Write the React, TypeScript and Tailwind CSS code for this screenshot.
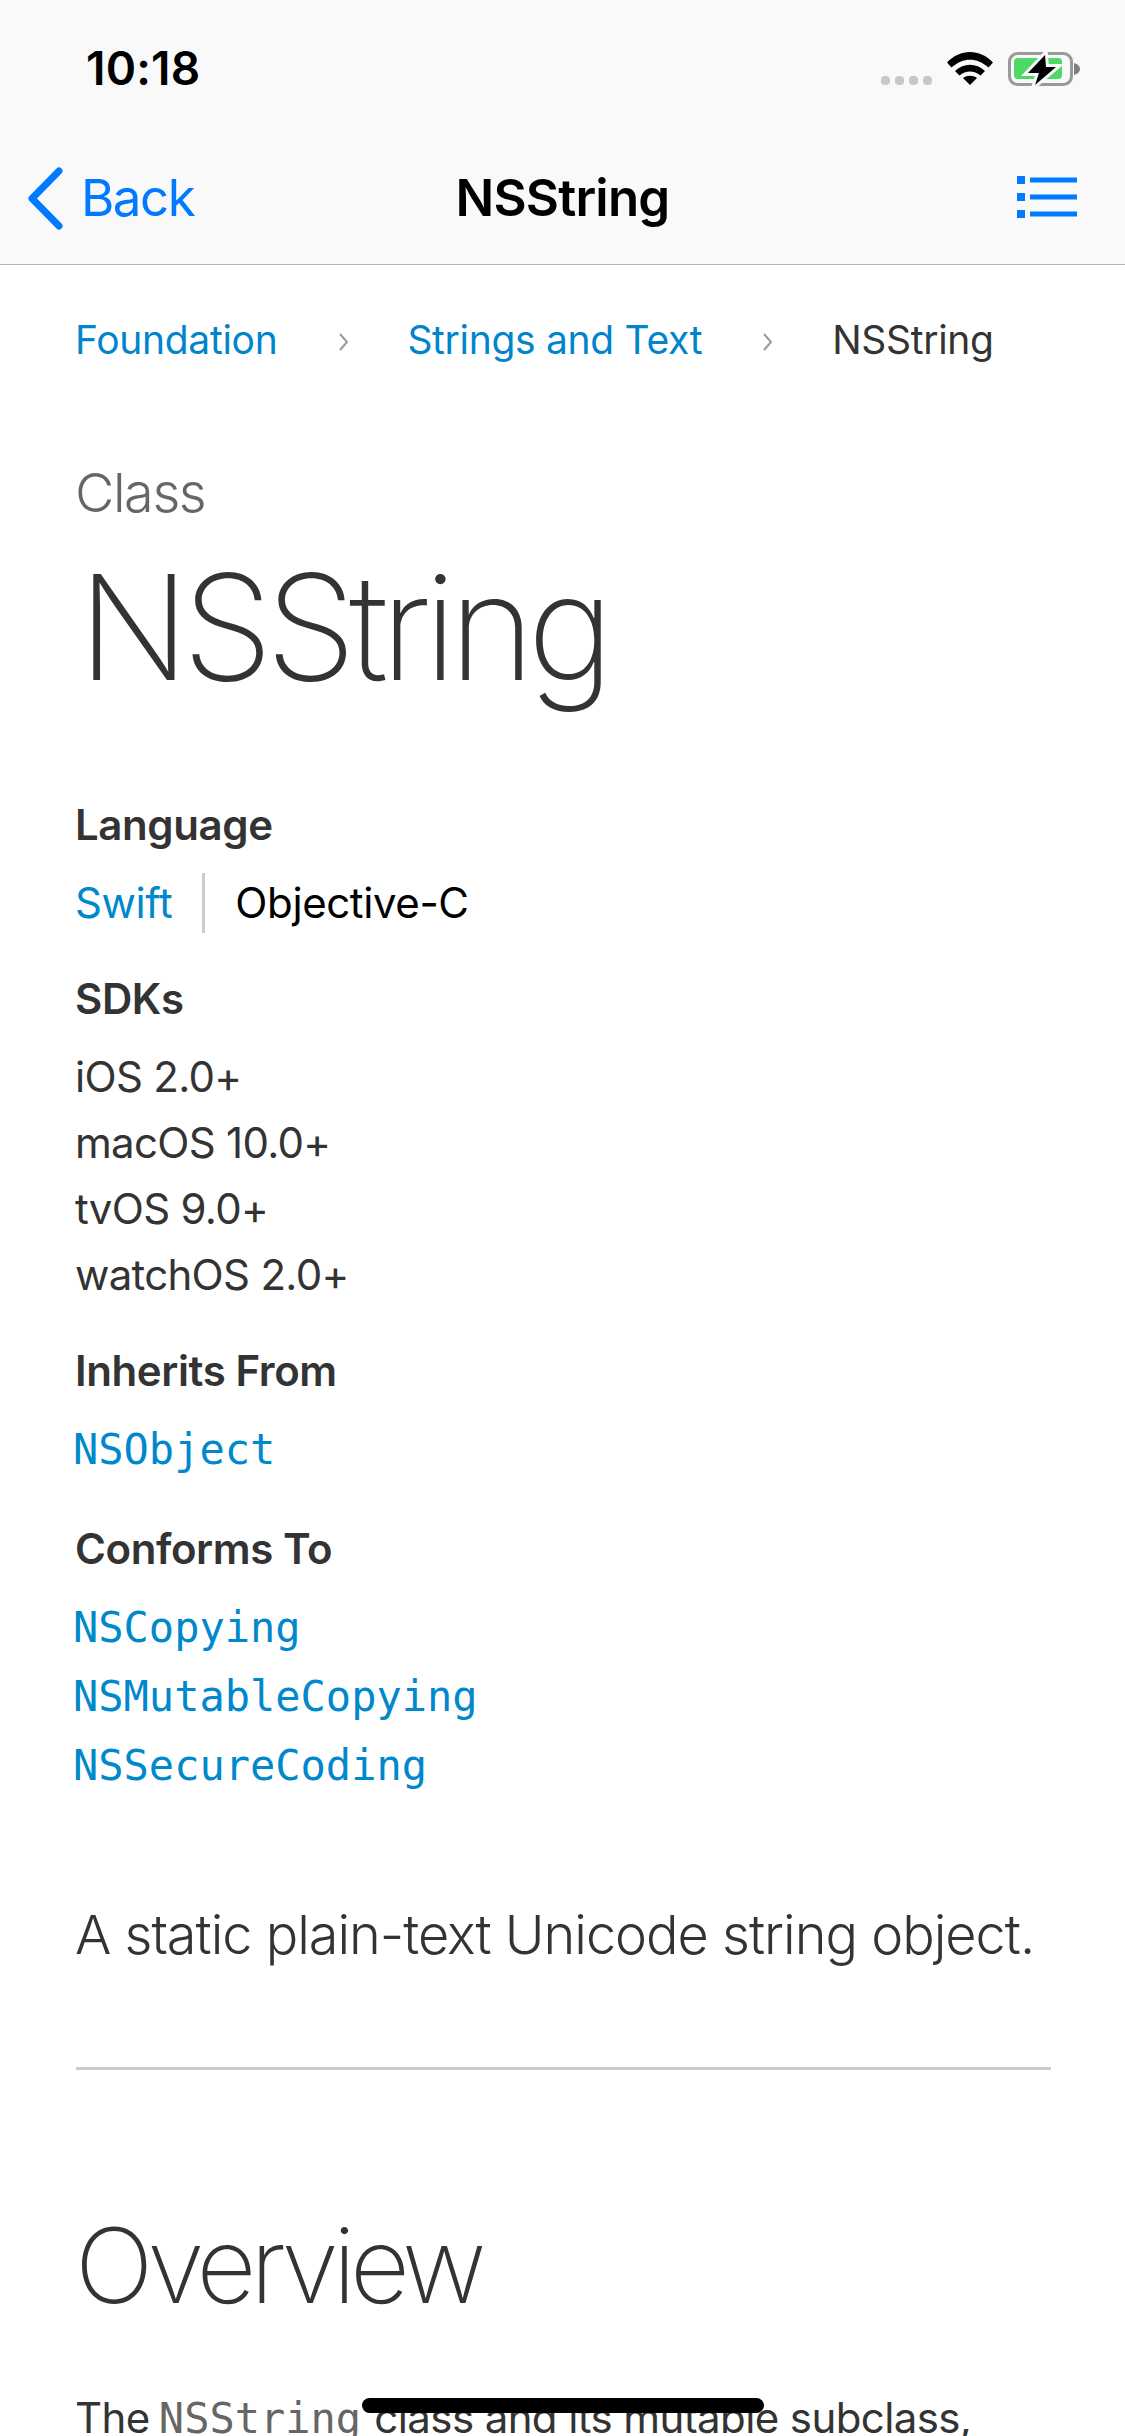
import React from "react";

const sans = "font-['Inter',sans-serif]";
const mono = "font-['DejaVu_Sans_Mono',monospace]";

function Wifi() {
  return (
    <svg width="46" height="33" viewBox="0 0 46 33" className="block">
      <path d="M0 10.5 C13 -3.5 33 -3.5 46 10.5 L41.5 15.5 C30 5 16 5 4.5 15.5 Z" fill="#000" />
      <path d="M8 19 C17 10.5 29 10.5 38 19 L33.5 23.5 C27 18 19 18 12.5 23.5 Z" fill="#000" />
      <path d="M16 26 C20 23 26 23 30 26 L23 33 Z" fill="#000" />
    </svg>
  );
}

function Battery() {
  return (
    <svg width="74" height="36" viewBox="0 0 74 36" className="block">
      <rect x="2.5" y="1.5" width="62" height="31" rx="8" fill="none" stroke="#999" strokeWidth="3" />
      <rect x="7" y="6" width="48" height="21" rx="4" fill="#4cd964" />
      <path d="M67 11 C70.5 12 73 14 73 17 C73 20 70.5 22 67 23 Z" fill="#7f7f7f" />
      <path d="M38 3 L21 21 H32 L28 33 L49 15 H39 Z" fill="#000" stroke="#f9f9f9" strokeWidth="6" strokeLinejoin="miter" />
      <path d="M38 3 L21 21 H32 L28 33 L49 15 H39 Z" fill="#000" />
    </svg>
  );
}

function ListIcon() {
  return (
    <svg width="60" height="43" viewBox="0 0 60 43" className="block" fill="#007aff">
      <rect x="0" y="0" width="8" height="8" />
      <rect x="13" y="1.5" width="47" height="5" />
      <rect x="0" y="17" width="8" height="8" />
      <rect x="13" y="18.5" width="47" height="5" />
      <rect x="0" y="34" width="8" height="8" />
      <rect x="13" y="35.5" width="47" height="5" />
    </svg>
  );
}

function Crumb() {
  return (
    <svg width="12" height="18" viewBox="0 0 12 18" className="block mt-[4px]">
      <path d="M2 1 L9 9 L2 17" fill="none" stroke="#999" strokeWidth="2" />
    </svg>
  );
}

function Label({ children, cls }: { children: React.ReactNode; cls: string }) {
  return <div className={`text-[42px] leading-[50px] font-semibold tracking-[-0.4px] text-[#333] ${cls}`}>{children}</div>;
}

export default function App() {
  return (
    <div className={`relative w-[1125px] h-[2436px] overflow-hidden bg-white ${sans}`}>
      <header className="h-[265px] bg-[#f9f9f9] border-b border-[#b2b2b2] flex flex-col">
        <div className="h-[132px] flex items-start justify-between pl-[86px] pr-[44px] pt-[41px]">
          <span className="text-[46px] leading-[54px] font-semibold text-black tracking-[0.2px]">10:18</span>
          <div className="flex items-start pt-[11px]">
            <div className="flex gap-[5px] mt-[24px] mr-[15px]">
              <span className="w-[9px] h-[9px] rounded-[4px] bg-[#c7c7c7]" />
              <span className="w-[9px] h-[9px] rounded-[4px] bg-[#c7c7c7]" />
              <span className="w-[9px] h-[9px] rounded-[4px] bg-[#c7c7c7]" />
              <span className="w-[9px] h-[9px] rounded-[4px] bg-[#c7c7c7]" />
            </div>
            <Wifi />
            <div className="ml-[14px]"><Battery /></div>
          </div>
        </div>
        <div className="relative flex-1 flex items-start justify-between pl-[27px] pr-[48px]">
          <div className="flex items-start pt-[35px] text-[#007aff]">
            <svg width="36" height="63" viewBox="0 0 36 63" className="block">
              <path d="M32 4 L5 31.5 L32 59" fill="none" stroke="#007aff" strokeWidth="7" strokeLinecap="round" strokeLinejoin="round" />
            </svg>
            <span className="ml-[18px] text-[51px] leading-[62px] tracking-[-1.5px]">Back</span>
          </div>
          <div className="absolute left-0 right-0 top-[35px] text-center text-[51px] leading-[62px] font-semibold tracking-[-0.8px] text-black pointer-events-none">NSString</div>
          <div className="pt-[44px]"><ListIcon /></div>
        </div>
      </header>

      <main className="px-[75px]">
        <nav className="flex items-center h-[50px] mt-[50px] text-[39px] leading-[50px] tracking-[-0.3px]">
          <span className="text-[#0085cc]">Foundation</span>
          <span className="ml-[61px]"><Crumb /></span>
          <span className="ml-[57px] text-[#0085cc]">Strings and Text</span>
          <span className="ml-[60px]"><Crumb /></span>
          <span className="ml-[58px] text-[#333]">NSString</span>
        </nav>

        <div className="mt-[94px] text-[54px] leading-[68px] font-light tracking-[-1.4px] text-[#666]">Class</div>
        <h1 className="mt-[10px] ml-[3px] text-[146px] leading-[180px] font-extralight text-[#333] tracking-[-7.5px]">NSString</h1>

        <Label cls="mt-[83px]">Language</Label>
        <div className="flex items-center mt-[23px] h-[60px] text-[42px] leading-[60px] tracking-[-0.4px]">
          <span className="text-[#0088cc]">Swift</span>
          <span className="ml-[30px] w-[3px] h-[60px] bg-[#ccc]" />
          <span className="ml-[30px] text-black">Objective-C</span>
        </div>

        <Label cls="mt-[41px]">SDKs</Label>
        <div className="mt-[20px] text-[42px] leading-[66px] tracking-[-0.7px] text-[#333]">
          <div>iOS 2.0+</div>
          <div>macOS 10.0+</div>
          <div>tvOS 9.0+</div>
          <div>watchOS 2.0+</div>
        </div>

        <Label cls="mt-[38px]">Inherits From</Label>
        <div className={`mt-[19px] text-[42px] leading-[69px] text-[#0088cc] ml-[-2px] ${mono}`}>NSObject</div>

        <Label cls="mt-[40px]">Conforms To</Label>
        <div className={`mt-[19px] text-[42px] leading-[69px] text-[#0088cc] ml-[-2px] ${mono}`}>
          <div>NSCopying</div>
          <div>NSMutableCopying</div>
          <div>NSSecureCoding</div>
        </div>

        <p className="mt-[100px] text-[54px] leading-[70px] font-light tracking-[-1px] text-[#333] whitespace-nowrap">A static plain-text Unicode string object.</p>
        <hr className="mt-[97px] ml-[1px] mr-[-1px] border-0 h-[3px] bg-[#ccc]" />
        <h2 className="mt-[133px] text-[104px] leading-[125px] font-extralight tracking-[-6px] text-[#333]">Overview</h2>
        <p className="mt-[60px] text-[42px] leading-[60px] tracking-[-0.6px] text-[#333] whitespace-nowrap">
          The <code className={`ml-[-2px] mr-[2px] text-[42px] tracking-normal text-[#666] ${mono}`}>NSString</code> class and its mutable subclass,
        </p>
      </main>

      <div className="absolute left-[362px] top-[2398px] w-[402px] h-[15px] rounded-full bg-black" />
    </div>
  );
}
